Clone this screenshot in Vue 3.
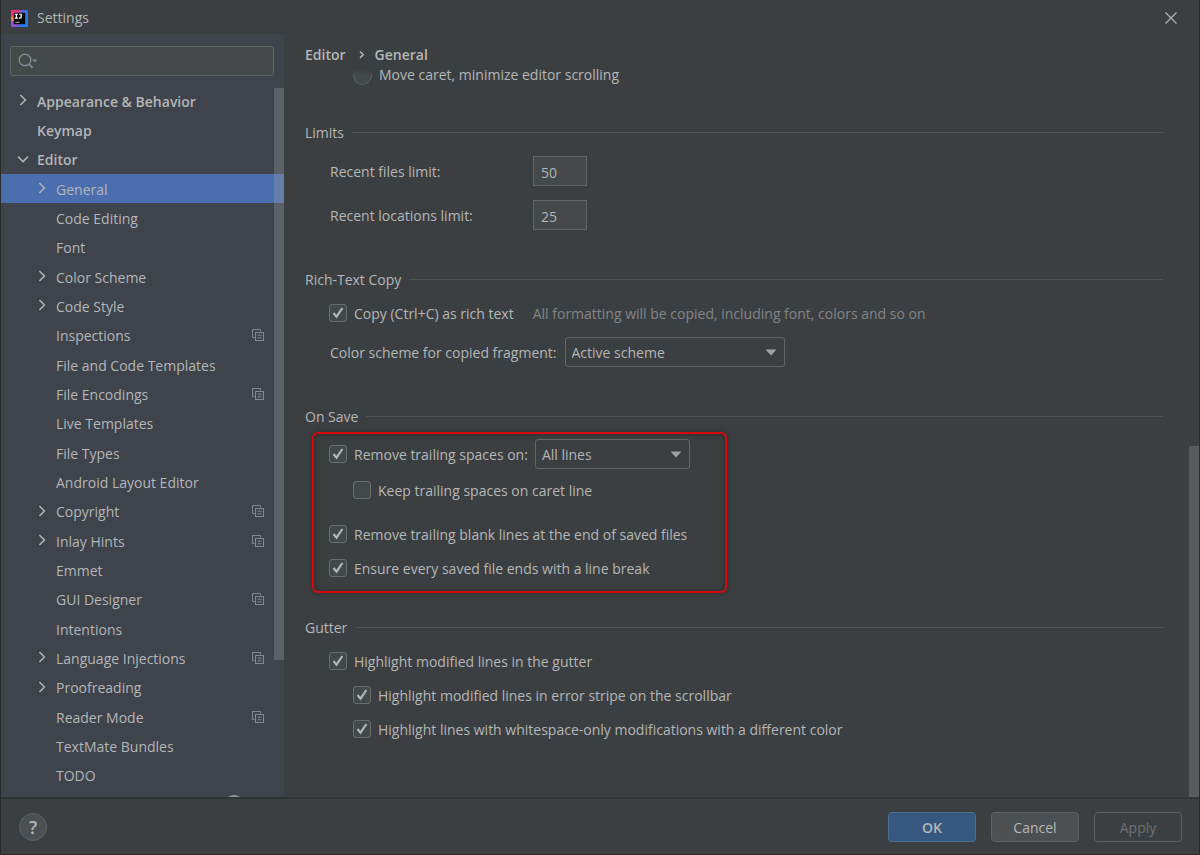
<script setup>
import { ref, reactive } from 'vue'

const items = [
  { name: 'Appearance & Behavior', level: 1, arrow: 'right' },
  { name: 'Keymap', level: 1 },
  { name: 'Editor', level: 1, arrow: 'down' },
  { name: 'General', level: 2, arrow: 'right' },
  { name: 'Code Editing', level: 2 },
  { name: 'Font', level: 2 },
  { name: 'Color Scheme', level: 2, arrow: 'right' },
  { name: 'Code Style', level: 2, arrow: 'right' },
  { name: 'Inspections', level: 2, project: true },
  { name: 'File and Code Templates', level: 2 },
  { name: 'File Encodings', level: 2, project: true },
  { name: 'Live Templates', level: 2 },
  { name: 'File Types', level: 2 },
  { name: 'Android Layout Editor', level: 2 },
  { name: 'Copyright', level: 2, arrow: 'right', project: true },
  { name: 'Inlay Hints', level: 2, arrow: 'right', project: true },
  { name: 'Emmet', level: 2 },
  { name: 'GUI Designer', level: 2, project: true },
  { name: 'Intentions', level: 2 },
  { name: 'Language Injections', level: 2, arrow: 'right', project: true },
  { name: 'Proofreading', level: 2, arrow: 'right' },
  { name: 'Reader Mode', level: 2, project: true },
  { name: 'TextMate Bundles', level: 2 },
  { name: 'TODO', level: 2 },
]

const selected = ref('General')
const query = ref('')
const form = reactive({
  minimize: false,
  files: '50',
  locations: '25',
  rich: true,
  scheme: 'Active scheme',
  trailing: true,
  lines: 'All lines',
  keep: false,
  blank: true,
  lineBreak: true,
  gutter: true,
  stripe: true,
  whitespace: true,
})

const saveChecks = [
  { key: 'keep', label: 'Keep trailing spaces on caret line', cls: 'nested keep' },
  { key: 'blank', label: 'Remove trailing blank lines at the end of saved files', cls: 'blank' },
  { key: 'lineBreak', label: 'Ensure every saved file ends with a line break', cls: '' },
]
const gutterChecks = [
  { key: 'gutter', label: 'Highlight modified lines in the gutter', cls: '' },
  { key: 'stripe', label: 'Highlight modified lines in error stripe on the scrollbar', cls: 'nested' },
  { key: 'whitespace', label: 'Highlight lines with whitespace-only modifications with a different color', cls: 'nested' },
]
</script>

<template>
  <div class="window">
    <header class="titlebar">
      <svg class="logo" viewBox="0 0 18 18" aria-hidden="true">
        <defs>
          <linearGradient id="logoEdge" x1="0" y1="0.3" x2="1" y2="0.6">
            <stop offset="0" stop-color="#fe2d5e" />
            <stop offset="0.4" stop-color="#c43fa0" />
            <stop offset="0.6" stop-color="#3b6fe8" />
            <stop offset="1" stop-color="#1f7cf0" />
          </linearGradient>
        </defs>
        <rect width="18" height="18" fill="url(#logoEdge)" />
        <path d="M0 7h4v6l-4-1z" fill="#f9802d" />
        <path d="M0 12l4-1v3l3 4H0z" fill="#8b4fd0" />
        <rect x="3" y="3" width="12" height="12" fill="#08080a" />
        <path d="M4 4.5h3.4M5.7 4.5v4M4 8.5h3.4M8.6 4.5h2.2v2.8q0 1.3-1.3 1.3H8.2" fill="none" stroke="#fff" stroke-width="1.3" />
        <path d="M4.5 13h4.5" stroke="#bbb" stroke-width="1" />
      </svg>
      <h1>Settings</h1>
      <button class="close" aria-label="Close">
        <svg viewBox="0 0 12 12"><path d="M0.5 0.5l11 11M11.5 0.5l-11 11" stroke="#b0b2b3" stroke-width="1.2" /></svg>
      </button>
    </header>

    <div class="body">
      <nav class="sidebar">
        <div class="search">
          <svg viewBox="0 0 20 16" aria-hidden="true">
            <circle cx="7" cy="7" r="5.8" fill="none" stroke="#7f8b91" stroke-width="1.4" />
            <path d="M11 11l3.6 3.8" stroke="#7f8b91" stroke-width="1.8" />
            <path d="M14 6.4h5.6l-2.8 3.2z" fill="#7f8b91" />
          </svg>
          <input v-model="query" type="text" aria-label="Search settings" />
        </div>
        <ul class="tree">
          <li v-for="it in items" :key="it.name">
            <a
              href="#"
              :class="['lvl' + it.level, { active: it.name === selected }]"
              @click.prevent="selected = it.name"
            >
              <span class="arrow">
                <svg v-if="it.arrow === 'right'" viewBox="0 0 12 12"><path d="M3.4 1l5 5-5 5" /></svg>
                <svg v-else-if="it.arrow === 'down'" viewBox="0 0 12 12"><path d="M1 3.6l5 5 5-5" /></svg>
              </span>
              <span class="name">{{ it.name }}</span>
              <svg v-if="it.project" class="project" viewBox="0 0 12 12">
                <path d="M2.5 8.5h-2v-8h8v2" />
                <rect x="3.5" y="3.5" width="8" height="8" />
                <path d="M5.5 6.2h4M5.5 8.8h4" />
              </svg>
            </a>
          </li>
        </ul>
        <svg class="peek" viewBox="0 0 12 2" aria-hidden="true"><path d="M0 2q6-4 12 0z" fill="#8b979e" /></svg>
        <div class="tree-thumb"></div>
      </nav>

      <main class="main">
        <div class="crumbs">
          <span>Editor</span>
          <svg viewBox="0 0 6 10" aria-hidden="true"><path d="M1 1.5l3.2 3.2-3.2 3.2" /></svg>
          <span>General</span>
        </div>

        <div class="scroll">
          <label class="radio">
            <input v-model="form.minimize" type="radio" :value="true" name="caret" />
            <span>Move caret, minimize editor scrolling</span>
          </label>

          <section class="limits">
            <h2>Limits</h2>
            <div class="field">
              <label for="files">Recent files limit:</label>
              <input id="files" v-model="form.files" type="text" />
            </div>
            <div class="field">
              <label for="locations">Recent locations limit:</label>
              <input id="locations" v-model="form.locations" type="text" />
            </div>
          </section>

          <section class="rich">
            <h2>Rich-Text Copy</h2>
            <div class="line">
              <label class="check">
                <span class="box">
                  <input v-model="form.rich" type="checkbox" />
                  <svg v-if="form.rich" viewBox="0 0 18 18"><path d="M4.5 9l3 3.6L13.4 4" /></svg>
                </span>
                <span>Copy (Ctrl+C) as rich text</span>
              </label>
              <span class="hint">All formatting will be copied, including font, colors and so on</span>
            </div>
            <div class="combo">
              <label for="scheme">Color scheme for copied fragment:</label>
              <span class="select wide">
                <select id="scheme" v-model="form.scheme"><option>Active scheme</option></select>
                <svg viewBox="0 0 12 7"><path d="M0.5 0.5h11L6 6.5z" /></svg>
              </span>
            </div>
          </section>

          <section class="save">
            <h2>On Save</h2>
            <div class="marked">
              <div class="trailing">
                <label class="check">
                  <span class="box">
                    <input v-model="form.trailing" type="checkbox" />
                    <svg v-if="form.trailing" viewBox="0 0 18 18"><path d="M4.5 9l3 3.6L13.4 4" /></svg>
                  </span>
                  <span>Remove trailing spaces on:</span>
                </label>
                <span class="select">
                  <select v-model="form.lines" aria-label="Remove trailing spaces on"><option>All lines</option></select>
                  <svg viewBox="0 0 12 7"><path d="M0.5 0.5h11L6 6.5z" /></svg>
                </span>
              </div>
              <label v-for="c in saveChecks" :key="c.key" :class="['check', c.cls]">
                <span class="box">
                  <input v-model="form[c.key]" type="checkbox" />
                  <svg v-if="form[c.key]" viewBox="0 0 18 18"><path d="M4.5 9l3 3.6L13.4 4" /></svg>
                </span>
                <span>{{ c.label }}</span>
              </label>
            </div>
          </section>

          <section class="gutter">
            <h2>Gutter</h2>
            <label v-for="c in gutterChecks" :key="c.key" :class="['check', c.cls]">
              <span class="box">
                <input v-model="form[c.key]" type="checkbox" />
                <svg v-if="form[c.key]" viewBox="0 0 18 18"><path d="M4.5 9l3 3.6L13.4 4" /></svg>
              </span>
              <span>{{ c.label }}</span>
            </label>
          </section>
        </div>
        <div class="main-thumb"></div>
      </main>
    </div>

    <footer class="footer">
      <button class="help" aria-label="Help">?</button>
      <div class="actions">
        <button class="ok">OK</button>
        <button>Cancel</button>
        <button disabled>Apply</button>
      </div>
    </footer>
  </div>
</template>

<style>
body {
  margin: 0;
  background: #3c3f41;
}
</style>

<style scoped>
* {
  box-sizing: border-box;
}
.window {
  display: flex;
  flex-direction: column;
  min-height: 100vh;
  border: 1px solid #2b2b2b;
  border-top: 0;
  background: #3c3f41;
  color: #b4b6b7;
  font: 14px/20px "Open Sans", "Noto Sans", sans-serif;
}
input,
select,
button {
  margin: 0;
  font: inherit;
  color: inherit;
}
h1,
h2 {
  margin: 0;
  font: inherit;
}
svg {
  display: block;
}
.titlebar {
  display: flex;
  align-items: center;
  height: 34px;
  padding: 2px 22px 0 10px;
}
.logo {
  width: 17px;
  height: 17px;
  margin-right: 9px;
}
.close {
  margin-left: auto;
  padding: 0;
  border: 0;
  background: none;
}
.close svg {
  width: 12px;
  height: 12px;
}
.body {
  display: flex;
  flex: 1;
}
.sidebar {
  position: relative;
  display: flex;
  flex-direction: column;
  width: 283px;
  padding: 12px 0 7px;
  background: #3e434c;
}
.search {
  display: flex;
  align-items: center;
  height: 30px;
  margin: 0 10px 10px 9px;
  padding-left: 7px;
  border: 1px solid #646666;
  border-radius: 3px;
  background: #45494a;
}
.search svg {
  width: 20px;
  height: 16px;
}
.search input {
  flex: 1;
  min-width: 0;
  border: 0;
  outline: 0;
  background: none;
}
.tree {
  display: grid;
  flex: 1;
  grid-auto-rows: 1fr;
  margin: 0;
  padding: 0;
  list-style: none;
}
.tree a {
  display: flex;
  align-items: center;
  height: 100%;
  padding: 2px 20px 0 16px;
  color: inherit;
  text-decoration: none;
}
.tree .lvl1 {
  font-weight: 600;
}
.tree .lvl2 {
  padding-left: 35px;
}
.tree .active {
  background: #4b6eaf;
}
.arrow {
  width: 20px;
}
.arrow svg {
  width: 12px;
  height: 12px;
  margin-bottom: 3px;
  fill: none;
  stroke: #b0b2b4;
  stroke-width: 1.6;
}
.name {
  flex: 1;
}
.project {
  width: 12px;
  height: 12px;
  margin-bottom: 2px;
  fill: none;
  stroke: #7f8b91;
}
.peek {
  position: absolute;
  bottom: 0;
  left: 227px;
  width: 12px;
  height: 2px;
}
.tree-thumb {
  position: absolute;
  top: 54px;
  right: 0;
  width: 10px;
  height: 75%;
  background: rgba(166, 166, 166, 0.3);
}
.main {
  position: relative;
  flex: 1;
  min-width: 0;
  padding: 8px 36px 0 21px;
}
.crumbs {
  display: flex;
  align-items: center;
  height: 26px;
  font-weight: 600;
}
.crumbs svg {
  width: 6px;
  height: 10px;
  margin: 0 10px 0 13px;
  fill: none;
  stroke: #b0b2b4;
  stroke-width: 1.5;
}
.radio {
  display: flex;
  align-items: center;
  gap: 7px;
  height: 30px;
  margin: -8px 0 33px 48px;
}
.radio input {
  width: 19px;
  height: 19px;
  border: 1px solid #646666;
  border-radius: 50%;
  background: #43494a;
  mask: linear-gradient(transparent 20%, #000 50%);
  appearance: none;
}
h2 {
  display: flex;
  align-items: center;
  gap: 8px;
}
h2::after {
  flex: 1;
  height: 1px;
  margin-bottom: 1px;
  background: #505354;
  content: "";
}
.field {
  display: flex;
  align-items: center;
  margin: 14px 0 0 24px;
}
h2 + .field {
  margin-top: 13px;
}
.field label {
  width: 204px;
  padding: 2px 0 0 1px;
}
.field input {
  width: 54px;
  height: 30px;
  padding: 2px 7px 0;
  border: 1px solid #646666;
  outline: 0;
  background: #45494a;
}
.rich,
.save {
  margin-top: 40px;
}
.line {
  display: flex;
  gap: 19px;
}
.hint {
  margin-top: 14px;
  color: #828587;
}
.check {
  display: flex;
  gap: 7px;
  width: fit-content;
  margin: 14px 0 0 24px;
}
.nested {
  margin-left: 48px;
}
.box {
  position: relative;
  width: 18px;
  height: 18px;
}
.box input {
  display: block;
  width: 18px;
  height: 18px;
  border: 1px solid #6b6d6d;
  border-radius: 3px;
  background: #43494a;
  appearance: none;
}
.box svg {
  position: absolute;
  inset: 0;
  fill: none;
  stroke: #b4b6b7;
  stroke-width: 2.2;
  pointer-events: none;
}
.combo {
  display: flex;
  align-items: center;
  gap: 8px;
  margin: 13px 0 0 24px;
}
.combo label {
  padding: 2px 0 0 1px;
}
.select {
  position: relative;
  width: 155px;
}
.select.wide {
  width: 220px;
}
.select select {
  display: block;
  width: 100%;
  height: 30px;
  padding: 2px 24px 0 6px;
  border: 1px solid #646666;
  border-radius: 3px;
  outline: 0;
  background: #3c3f41;
  appearance: none;
}
.select svg {
  position: absolute;
  top: 12px;
  right: 8px;
  width: 12px;
  height: 7px;
  fill: #a0a3a5;
  pointer-events: none;
}
.marked {
  width: 415px;
  margin: 5px 0 0 7px;
  padding: 5px 0 12px 15px;
  border: 2px solid #d8090d;
  border-radius: 6px;
  box-shadow: inset 0 0 6px rgba(0, 0, 0, 0.3), 0 0 5px rgba(0, 0, 0, 0.25);
}
.marked .check {
  margin-left: 0;
}
.marked .nested {
  margin: 12px 0 0 24px;
}
.marked .blank {
  margin-top: 24px;
}
.trailing {
  display: flex;
  align-items: center;
  gap: 7px;
}
.trailing .check {
  margin: 2px 0 0;
}
.gutter {
  margin-top: 25px;
}
.main-thumb {
  position: absolute;
  right: 0;
  bottom: 0;
  width: 10px;
  height: 46%;
  background: #585a5b;
}
.footer {
  display: flex;
  align-items: center;
  justify-content: space-between;
  height: 57px;
  padding: 1px 17px 0 18px;
  border-top: 2px solid #323435;
}
.help {
  width: 28px;
  height: 28px;
  padding: 0;
  border: 1px solid #5e6162;
  border-radius: 50%;
  background: #4c5052;
  font-size: 18px;
  font-weight: 600;
  line-height: 26px;
}
.actions {
  display: flex;
  gap: 15px;
}
.actions button {
  width: 88px;
  height: 30px;
  padding: 2px 0 0;
  border: 1px solid #5e6162;
  border-radius: 4px;
  background: #4c5052;
}
.actions .ok {
  border-color: #4c708c;
  background: #365880;
  font-weight: 600;
}
.actions button:disabled {
  background: none;
  color: #6f7172;
}
</style>
